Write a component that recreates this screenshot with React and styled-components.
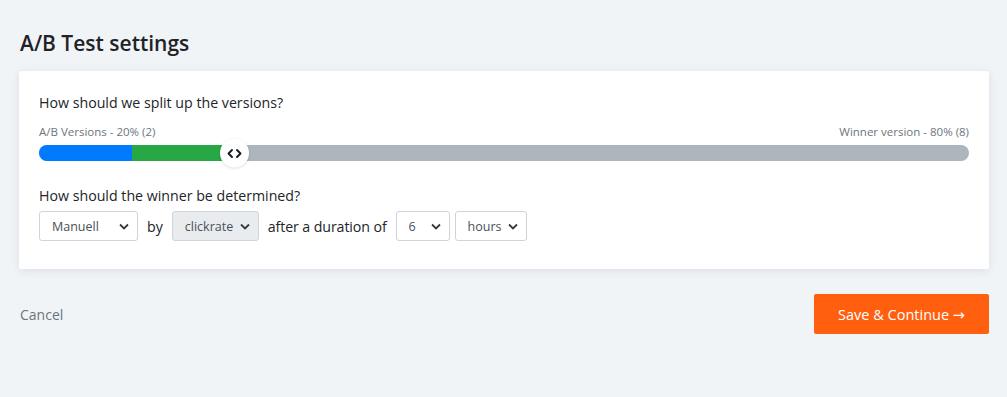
import React from 'react';
import styled, { createGlobalStyle } from 'styled-components';

const GlobalStyle = createGlobalStyle`
  html, body {
    margin: 0;
    padding: 0;
    background: #f1f4f7;
  }
  body {
    font-family: 'Open Sans', 'Noto Sans', sans-serif;
    color: #212529;
  }
`;

const Page = styled.div`
  padding: 29px 18px 0 19px;
`;

const Heading = styled.h2`
  margin: 0 0 14px 1px;
  font-size: 21px;
  font-weight: 600;
  line-height: 28px;
  color: #1f2327;
`;

const Card = styled.div`
  background: #ffffff;
  padding: 22px 20px 28px 20px;
  box-shadow: 0 2px 10px rgba(30, 40, 60, 0.1);
  border-radius: 2px;
`;

const Question = styled.div`
  font-size: 14.2px;
  line-height: 20px;
  color: #212529;
  margin-bottom: ${({ $gap }) => $gap || '8px'};
`;

const SplitLabels = styled.div`
  display: flex;
  justify-content: space-between;
  font-size: 11.5px;
  line-height: 16px;
  color: #6c757d;
  margin-bottom: 5px;
`;

const Track = styled.div`
  position: relative;
  display: flex;
  height: 16px;
  border-radius: 8px;
  background: #adb5bd;
  margin-bottom: 25px;
`;

const Segment = styled.div`
  height: 100%;
  background: ${({ $color }) => $color};
  &:first-child {
    border-radius: 8px 0 0 8px;
  }
`;

const Thumb = styled.div`
  position: absolute;
  top: 50%;
  width: 29px;
  height: 29px;
  margin-left: -14px;
  transform: translateY(-50%);
  border-radius: 50%;
  background: #ffffff;
  box-shadow: 0 1px 3px rgba(0, 0, 0, 0.12);
  display: flex;
  align-items: center;
  justify-content: center;
`;

const Controls = styled.div`
  display: flex;
  align-items: center;
  gap: 9px;
  font-size: 14.2px;
  color: #212529;
`;

const Select = styled.select`
  appearance: none;
  height: 30px;
  width: ${({ $w }) => $w}px;
  padding: 0 24px 0 12px;
  font-family: inherit;
  font-size: 12.5px;
  color: #495057;
  border: 1px solid #ced4da;
  border-radius: 3px;
  background-color: ${({ $disabled }) => ($disabled ? '#e9ecef' : '#ffffff')};
  background-image: url("data:image/svg+xml,%3Csvg xmlns='http://www.w3.org/2000/svg' width='10' height='7' viewBox='0 0 10 7'%3E%3Cpath d='M1 1.5l4 4 4-4' fill='none' stroke='%23343a40' stroke-width='1.8'/%3E%3C/svg%3E");
  background-repeat: no-repeat;
  background-position: right 8px center;
  outline: none;
`;

const DurationText = styled.span`
  letter-spacing: -0.1px;
`;

const Footer = styled.div`
  display: flex;
  justify-content: space-between;
  align-items: center;
  padding: 25px 0 0 1px;
`;

const CancelLink = styled.a`
  font-size: 14px;
  color: #6c757d;
  cursor: pointer;
`;

const PrimaryButton = styled.button`
  height: 40px;
  padding: 0 24px;
  border: none;
  border-radius: 2px;
  background: #ff5f0f;
  color: #ffffff;
  font-family: 'Open Sans', 'DejaVu Sans', sans-serif;
  font-size: 14.5px;
  cursor: pointer;
`;

function Chevrons() {
  return (
    <svg width="15" height="10" viewBox="0 0 15 10" fill="none" stroke="#151a24" strokeWidth="1.9" strokeLinecap="round" strokeLinejoin="round">
      <path d="M5 1.5L1.5 5 5 8.5" />
      <path d="M10 1.5L13.5 5 10 8.5" />
    </svg>
  );
}

export default function App() {
  const blue = 10;
  const green = 11;
  return (
    <>
      <GlobalStyle />
      <Page>
        <Heading>A/B Test settings</Heading>
        <Card>
          <Question $gap="11px">How should we split up the versions?</Question>
          <SplitLabels>
            <span>A/B Versions - 20% (2)</span>
            <span>Winner version - 80% (8)</span>
          </SplitLabels>
          <Track>
            <Segment $color="#007bff" style={{ width: `${blue}%` }} />
            <Segment $color="#28a745" style={{ width: `${green}%` }} />
            <Thumb style={{ left: `${blue + green}%` }}>
              <Chevrons />
            </Thumb>
          </Track>
          <Question $gap="5px">How should the winner be determined?</Question>
          <Controls>
            <Select $w={99} defaultValue="manuell">
              <option value="manuell">Manuell</option>
            </Select>
            <span>by</span>
            <Select $w={87} $disabled defaultValue="clickrate">
              <option value="clickrate">clickrate</option>
            </Select>
            <DurationText>after a duration of</DurationText>
            <Select $w={54} defaultValue="6">
              <option value="6">6</option>
            </Select>
            <Select $w={72} style={{ marginLeft: -4 }} defaultValue="hours">
              <option value="hours">hours</option>
            </Select>
          </Controls>
        </Card>
        <Footer>
          <CancelLink>Cancel</CancelLink>
          <PrimaryButton>Save &amp; Continue →</PrimaryButton>
        </Footer>
      </Page>
    </>
  );
}
